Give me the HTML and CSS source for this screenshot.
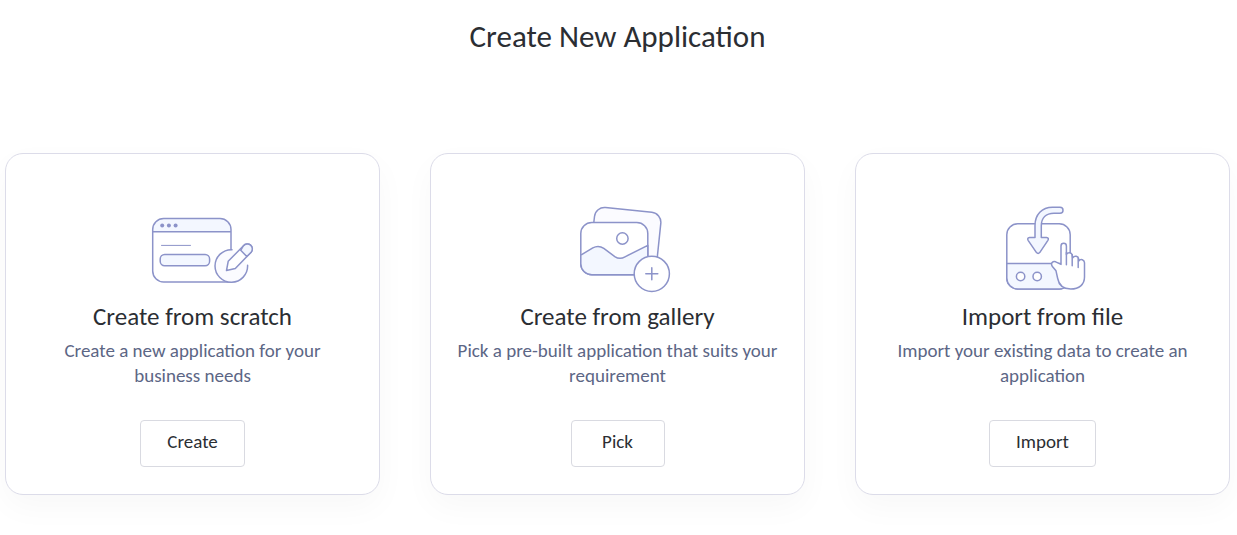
FILE: index.html
```html
<!DOCTYPE html>
<html lang="en">
<head>
  <meta charset="UTF-8">
  <meta name="viewport" content="width=device-width, initial-scale=1.0">
  <title>Create New Application</title>
  <link rel="stylesheet" href="styles.css">
</head>
<body>

  <main class="page">
    <h1 class="page-title">Create New Application</h1>

    <div class="cards">
      <!-- Scratch -->
      <section class="card">
        <svg class="card-icon" viewBox="-13 0 131 100" aria-hidden="true">
          <path class="fill-tint" d="M12.7 31.7V29.5a11 11 0 0 1 11-11H80a11 11 0 0 1 11 11v2.2z"/>
          <path d="M91 49.500V29.500a11 11 0 0 0-11-11H23.700a11 11 0 0 0-11 11V71a11 11 0 0 0 11 11H91M12.700 31.700H91"/>
          <g class="dots">
            <circle cx="22.200" cy="25.600" r="2"/>
            <circle cx="28.900" cy="25.600" r="2"/>
            <circle cx="35.600" cy="25.600" r="2"/>
          </g>
          <path class="thin" d="M21.500 45.400h29"/>
          <rect class="tint" x="20.200" y="54.500" width="49.400" height="11.200" rx="4.500"/>
          <path class="pale" d="M92 49.700a16.300 16.300 0 1 0 15.600 15.500"/>
          <path class="white" d="M86.500 70.500l1.700-9.200 15.300-15.600a4.500 4.500 0 0 1 7.600 6.500L95.300 68.500z"/>
          <path class="fill-tint" d="M100.700 50.300l3.400-4.600a4.500 4.500 0 0 1 7 6.500l-4.300 4.300z"/>
          <path d="M106.800 56.500l-6.100-6.200 2.800-4.600a4.500 4.500 0 0 1 7.600 6.500z"/>
        </svg>
        <h2 class="card-title">Create from scratch</h2>
        <p class="card-text">Create a new application for your business needs</p>
        <button class="btn" type="button">Create</button>
      </section>

      <!-- Gallery -->
      <section class="card">
        <svg class="card-icon" viewBox="-13 0 131 100" aria-hidden="true">
          <path class="pale" d="M28.800 22.500l.7-6a10 10 0 0 1 11-9l46.300 4.800a10 10 0 0 1 9 11L92.300 57 80 60z"/>
          <rect class="white" x="15.800" y="22.500" width="67" height="52.300" rx="11"/>
          <path class="tint" d="M15.800 55.200l12-7.300q5.700-3.200 11 .5l11 8.200q5 3.300 10.200.2l22.800-11.500v18.500a11 11 0 0 1-11 11h-45a11 11 0 0 1-11-11z"/>
          <circle cx="57.400" cy="38.500" r="5.700"/>
          <circle class="white" cx="86.800" cy="73.800" r="17.600"/>
          <path d="M86.800 67.800v12M80.800 73.800h12"/>
        </svg>
        <h2 class="card-title">Create from gallery</h2>
        <p class="card-text">Pick a pre-built application that suits your requirement</p>
        <button class="btn" type="button">Pick</button>
      </section>

      <!-- Import -->
      <section class="card">
        <svg class="card-icon" viewBox="-13 0 131 100" aria-hidden="true">
          <rect class="white" x="16.800" y="23.800" width="63.400" height="65.200" rx="11"/>
          <path class="tint" d="M16.800 63.500h63.400V78a11 11 0 0 1-11 11H27.800a11 11 0 0 1-11-11z"/>
          <circle class="white" cx="30.600" cy="76.500" r="4.200"/>
          <circle class="white" cx="47.200" cy="76.500" r="4.200"/>
          <path class="tint" d="M45 37.500V25.500C45 14.500 52 7.300 62.500 7.300H70a3 3 0 0 1 0 6H64C56 13.300 51.300 18 51.300 26v11.500h5.200q2.800.3 1.400 2.800l-8.200 12.300q-1.600 1.700-3.200 0l-8.400-12.300q-1.200-2.500 1.400-2.800z"/>
          <path class="white" d="M80.700 89C71 88.800 68.400 82.500 67.700 78.500L66 70.800l-3.600-4.300c-2.200-3.300.5-5.600 3.300-4.700l5.300 2.600V46a2.700 2.700 0 0 1 5.400 0v8.500c1.400-2.500 5-2.200 5.800.3l.5 3c2-2.600 5.600-1.700 6 1.200v2c2-2.800 5.800-1.300 5.800 1.800V77c0 7.500-5.300 12-13.800 12z"/>
          <path d="M76.400 52.500v12.200M82.200 54.800v11M88.200 58.500v9"/>
        </svg>
        <h2 class="card-title">Import from file</h2>
        <p class="card-text">Import your existing data to create an application</p>
        <button class="btn" type="button">Import</button>
      </section>
    </div>
  </main>

</body>
</html>
```

FILE: styles.css
```css
* {
  box-sizing: border-box;
}

body {
  margin: 0;
  background: #fff;
  color: #2b2e33;
  font-family: Carlito, Lato, sans-serif;
}

.page {
  padding: 18px 7px 40px 5px;
}

.page-title {
  margin: 0 0 99px;
  font-size: 31px;
  font-weight: 400;
  line-height: 36px;
  text-align: center;
}

.cards {
  display: grid;
  grid-template-columns: repeat(3, 1fr);
  gap: 50px;
}

.card {
  display: flex;
  flex-direction: column;
  align-items: center;
  padding: 46px 26px 27px;
  background: #fff;
  border: 1px solid #dcdce9;
  border-radius: 18px;
  box-shadow: 0 12px 32px rgba(0, 0, 0, 0.03);
  text-align: center;
}

.card-icon {
  width: 131px;
  height: 100px;
  fill: none;
  stroke: #8c93c9;
  stroke-width: 1.5;
  stroke-linecap: round;
  stroke-linejoin: round;
}

.card-icon .tint {
  fill: #f3f7ff;
}

.card-icon .fill-tint {
  fill: #f3f7ff;
  stroke: none;
}

.card-icon .pale {
  fill: #fbfbff;
}

.card-icon .white {
  fill: #fff;
}

.card-icon .thin {
  stroke-width: 1;
}

.card-icon .dots {
  fill: #8c93c9;
  stroke: none;
}

.card-title {
  margin: 2px 0 6px;
  font-size: 25px;
  font-weight: 400;
  line-height: 30px;
}

.card-text {
  margin: 0 0 32px;
  color: #5c6685;
  font-size: 19px;
  line-height: 25px;
}

.btn {
  min-width: 94px;
  padding: 9px 26px 13px;
  background: #fff;
  border: 1px solid #d9dae1;
  border-radius: 4px;
  color: #2b2e33;
  font-family: inherit;
  font-size: 19px;
  line-height: 23px;
  cursor: pointer;
}
```
